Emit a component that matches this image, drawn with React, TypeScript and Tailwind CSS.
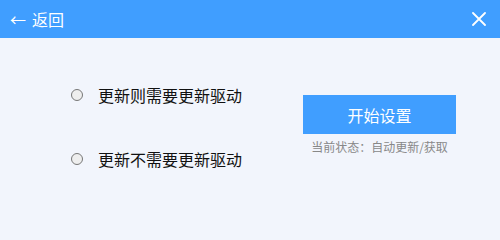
export default function App() {
  const options = ['更新则需要更新驱动', '更新不需要更新驱动'];

  return (
    <div
      className="w-[500px] h-[240px] bg-[#f2f5fc] flex flex-col"
      style={{ fontFamily: '"Noto Sans CJK SC", "Liberation Sans", sans-serif' }}
    >
      <div className="h-[38px] bg-[#409eff] flex items-center justify-between pl-[10px] pr-[14px] text-white">
        <div className="flex items-center gap-[6px] text-[16px] leading-none">
          <span>←</span>
          <span>返回</span>
        </div>
        <svg width="14" height="14" viewBox="0 0 14 14" stroke="white" strokeWidth="1.8" strokeLinecap="round">
          <path d="M1 1 L13 13 M13 1 L1 13" />
        </svg>
      </div>

      <div className="flex flex-1">
        <div className="flex flex-col pl-[71px] pt-[45px] gap-[40px]">
          {options.map((label) => (
            <label key={label} className="flex items-center h-[24px] gap-[15px]">
              <span className="w-[12px] h-[12px] rounded-full border border-[#777] bg-[#eeeeee]" />
              <span className="text-[16px] text-[#111] leading-none">{label}</span>
            </label>
          ))}
        </div>

        <div className="ml-auto mr-[44px] pt-[57px] flex flex-col items-center">
          <button className="w-[153px] h-[39px] bg-[#409eff] text-white text-[16px]">开始设置</button>
          <div className="mt-[7px] text-[12px] text-[#888] leading-none">当前状态：自动更新/获取</div>
        </div>
      </div>
    </div>
  );
}
